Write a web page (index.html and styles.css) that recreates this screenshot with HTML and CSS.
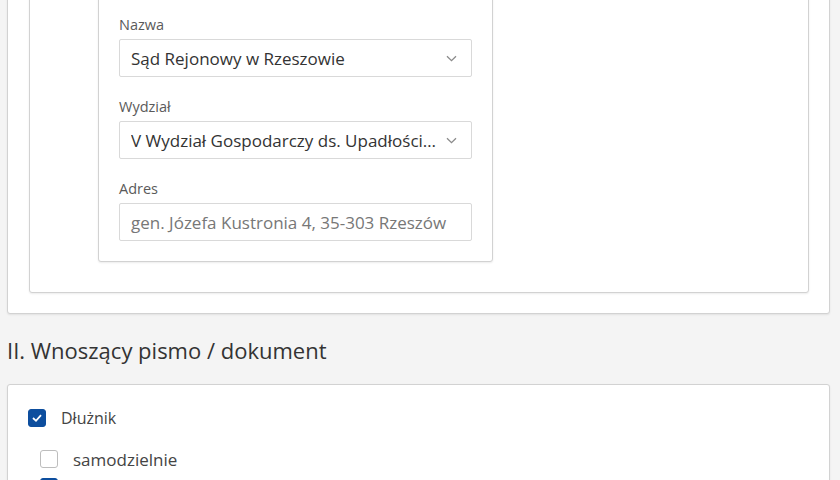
FILE: index.html
```html
<!DOCTYPE html>
<html lang="pl">
<head>
<meta charset="utf-8">
<title>Formularz</title>
<link rel="stylesheet" href="styles.css">
</head>
<body>
<div class="page">
  <section class="card outer">
    <div class="card inner">
      <div class="card box">
        <div class="field">
          <div class="label">Nazwa</div>
          <div class="select">
            <span class="value">Sąd Rejonowy w Rzeszowie</span>
            <svg class="chev" width="11" height="7" viewBox="0 0 11 7"><path d="M1 1.2 L5.5 5.6 L10 1.2" fill="none" stroke="#8a8a8a" stroke-width="1.3"/></svg>
          </div>
        </div>
        <div class="field">
          <div class="label">Wydział</div>
          <div class="select">
            <span class="value">V Wydział Gospodarczy ds. Upadłościowych i Restrukturyzacyjnych</span>
            <svg class="chev" width="11" height="7" viewBox="0 0 11 7"><path d="M1 1.2 L5.5 5.6 L10 1.2" fill="none" stroke="#8a8a8a" stroke-width="1.3"/></svg>
          </div>
        </div>
        <div class="field">
          <div class="label">Adres</div>
          <div class="input">gen. Józefa Kustronia 4, 35-303 Rzeszów</div>
        </div>
      </div>
    </div>
  </section>

  <h2 class="section-title">II. Wnoszący pismo / dokument</h2>

  <section class="card outer lower">
    <div class="check-row">
      <span class="checkbox checked"><svg width="12" height="10" viewBox="0 0 12 10"><path d="M2 5 L5 7.8 L10 2.2" fill="none" stroke="#fff" stroke-width="1.8"/></svg></span>
      <span class="check-label main">Dłużnik</span>
    </div>
    <div class="sub-options">
      <div class="check-row">
        <span class="checkbox"></span>
        <span class="check-label">samodzielnie</span>
      </div>
      <div class="check-row">
        <span class="checkbox checked"><svg width="12" height="10" viewBox="0 0 12 10"><path d="M2 5 L5 7.8 L10 2.2" fill="none" stroke="#fff" stroke-width="1.8"/></svg></span>
        <span class="check-label">przez pełnomocnika</span>
      </div>
    </div>
  </section>
</div>
</body>
</html>
```

FILE: styles.css
```css
html, body {
  margin: 0;
  padding: 0;
  background: #f4f4f4;
  font-family: "Open Sans", "Noto Sans", sans-serif;
  color: #333;
}

.page {
  margin: -8px 10px 0 7px;
}

.card {
  background: #fff;
  border: 1px solid #d2d2d2;
  border-radius: 3px;
  box-shadow: 0 1px 2px rgba(0, 0, 0, 0.08);
}

.outer {
  padding: 0 20px 20px 21px;
}

.inner {
  padding: 0 0 30px 68px;
}

.box {
  width: 353px;
  padding: 20px 20px 20px 20px;
}

.field + .field {
  margin-top: 20px;
}

.label {
  font-size: 14.5px;
  line-height: 20px;
  color: #5a5a5a;
  margin-bottom: 4px;
}

.select,
.input {
  height: 36px;
  border: 1px solid #d9d9d9;
  border-radius: 2px;
  background: #fff;
  display: flex;
  align-items: center;
  font-size: 17px;
}

.select {
  padding: 0 14px 0 11px;
  gap: 4px;
}

.select .value {
  flex: 1;
  min-width: 0;
  white-space: nowrap;
  overflow: hidden;
  text-overflow: ellipsis;
  color: #333;
}

.chev {
  flex: none;
  margin-top: 1px;
}

.input {
  padding: 0 11px;
  color: #777;
}

.section-title {
  margin: 21px 0 19px 0;
  font-size: 22px;
  line-height: 30px;
  font-weight: 500;
  color: #333;
}

.lower {
  padding: 23px 20px 40px 20px;
  min-height: 200px;
}

.check-row {
  display: flex;
  align-items: center;
  gap: 15px;
  height: 20px;
}

.sub-options {
  margin-top: 21px;
  padding-left: 12px;
  display: flex;
  flex-direction: column;
  gap: 8px;
}

.checkbox {
  width: 16px;
  height: 16px;
  border: 1px solid #bdbdbd;
  border-radius: 3px;
  background: #fff;
  display: flex;
  align-items: center;
  justify-content: center;
  flex: none;
}

.checkbox.checked {
  background: #0d4e9e;
  border-color: #0d4e9e;
}

.check-label {
  font-size: 17px;
  color: #444;
}

.check-label.main {
  font-size: 16px;
}
```
